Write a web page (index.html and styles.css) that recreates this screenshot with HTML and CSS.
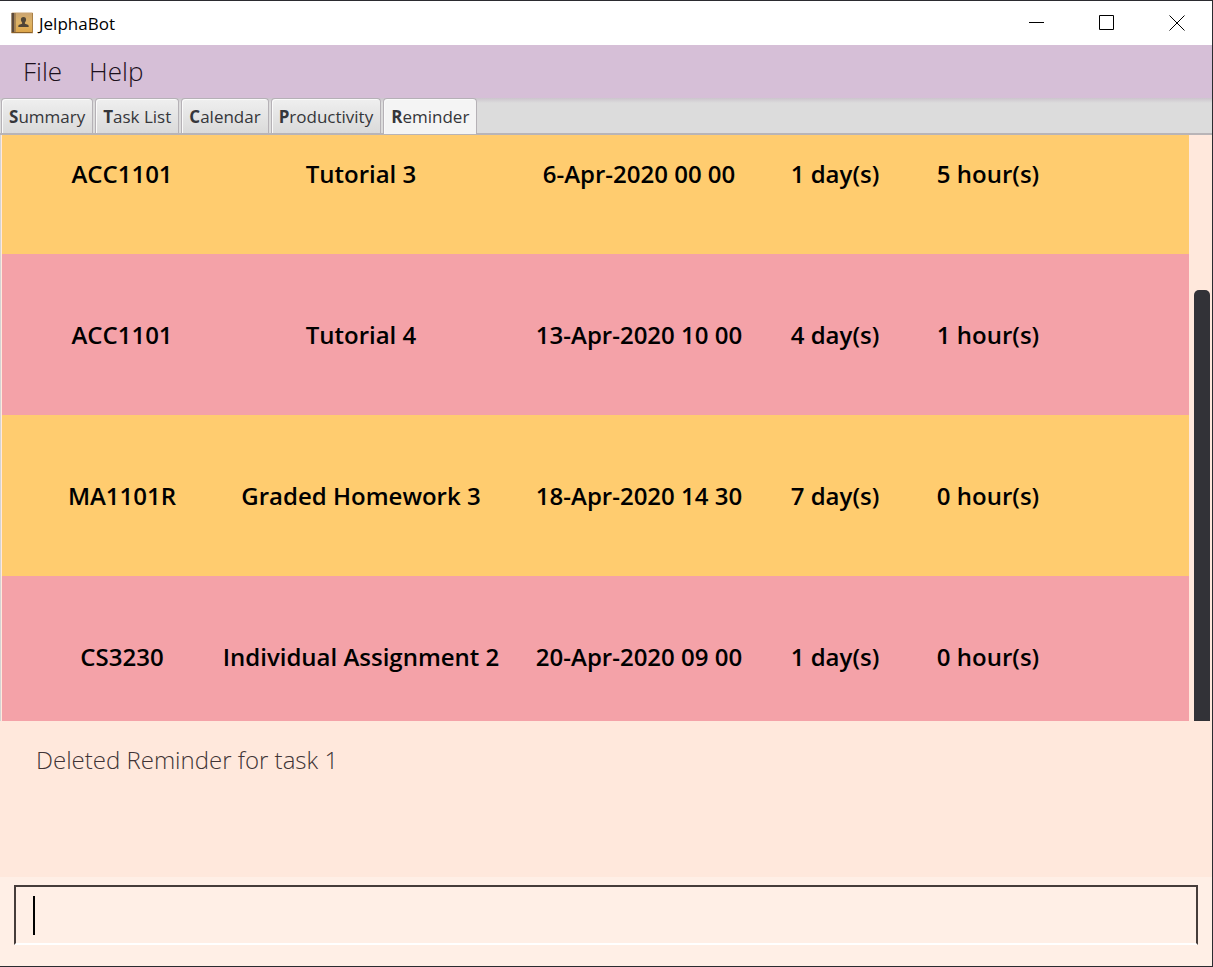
FILE: index.html
```html
<!DOCTYPE html>
<html lang="en">
<head>
<meta charset="utf-8">
<title>JelphaBot</title>
<link rel="stylesheet" href="styles.css">
</head>
<body>
<div class="window">
  <header class="titlebar">
    <svg class="app-icon" width="22" height="22" viewBox="0 0 22 22" aria-hidden="true">
      <defs>
        <linearGradient id="cover" x1="0" y1="0" x2="0" y2="1">
          <stop offset="0" stop-color="#c9a372"/>
          <stop offset=".5" stop-color="#dfb465"/>
          <stop offset="1" stop-color="#dda447"/>
        </linearGradient>
      </defs>
      <rect x="0.500" y="0.500" width="21.500" height="20.500" rx="1" fill="url(#cover)"/>
      <path d="M.5 1h3v19.500h-3z" fill="#5c4a3c"/>
      <path d="M3.500 1h1.500v19.500H3.500z" fill="#a98656"/>
      <path d="M.5 20h21.500v1.200H.5z" fill="#8a6028"/>
      <path d="M21 1h1v20h-1z" fill="#a98046"/>
      <path d="M12.500 5c1.800 0 2.700 1.200 2.600 2.800-.1 1.200-.6 2.200-1.200 2.700v1.300l3 1c.6.300.8 1 .8 2.200H7.300c0-1.200.2-1.900.8-2.200l3-1v-1.300c-.6-.5-1.100-1.500-1.200-2.700C9.800 6.200 10.700 5 12.500 5z" fill="#4f4537"/>
    </svg>
    <h1 class="app-title">JelphaBot</h1>
    <div class="window-controls">
      <button class="window-button" type="button" aria-label="Minimize"><svg width="16" height="16" viewBox="0 0 16 16"><path d="M0 7.500h15"/></svg></button>
      <button class="window-button" type="button" aria-label="Maximize"><svg width="16" height="16" viewBox="0 0 16 16"><path d="M.5.5h14v14H.5z"/></svg></button>
      <button class="window-button" type="button" aria-label="Close"><svg width="16" height="16" viewBox="0 0 16 16"><path d="M.5.5l15 15M15.500.5l-15 15"/></svg></button>
    </div>
  </header>
  <nav class="menubar">
    <button class="menu" type="button">File</button>
    <button class="menu" type="button">Help</button>
  </nav>
  <div class="tabs" role="tablist">
    <button class="tab" type="button" role="tab"><b>S</b>ummary</button>
    <button class="tab" type="button" role="tab"><b>T</b>ask List</button>
    <button class="tab" type="button" role="tab"><b>C</b>alendar</button>
    <button class="tab" type="button" role="tab"><b>P</b>roductivity</button>
    <button class="tab tab-selected" type="button" role="tab" aria-selected="true"><b>R</b>eminder</button>
  </div>
  <main class="panel">
    <div class="viewport">
      <table class="reminders">
        <colgroup><col class="col-module"><col class="col-task"><col class="col-due"><col class="col-days"><col class="col-hours"><col></colgroup>
        <tbody>
          <tr><td class="first">ACC1101</td><td>Tutorial 3</td><td>6-Apr-2020 00 00</td><td>1 day(s)</td><td>5 hour(s)</td><td></td></tr>
          <tr><td class="first">ACC1101</td><td>Tutorial 4</td><td>13-Apr-2020 10 00</td><td>4 day(s)</td><td>1 hour(s)</td><td></td></tr>
          <tr><td class="first">MA1101R</td><td>Graded Homework 3</td><td>18-Apr-2020 14 30</td><td>7 day(s)</td><td>0 hour(s)</td><td></td></tr>
          <tr><td class="first">CS3230</td><td>Individual Assignment 2</td><td>20-Apr-2020 09 00</td><td>1 day(s)</td><td>0 hour(s)</td><td></td></tr>
        </tbody>
      </table>
    </div>
    <div class="scrollbar"><div class="thumb"></div></div>
  </main>
  <section class="result">Deleted Reminder for task 1</section>
  <form class="command">
    <label class="command-box">
      <span class="caret"></span>
      <input class="command-input" type="text" aria-label="Command">
    </label>
  </form>
</div>
</body>
</html>
```

FILE: styles.css
```css
* { box-sizing: border-box; }

body {
  margin: 0;
  font-family: "Open Sans", "Noto Sans", sans-serif;
}

button {
  border: 0;
  padding: 0;
  background: none;
  font-family: inherit;
}

.window {
  display: flex;
  flex-direction: column;
  height: 100vh;
  border: 1px solid #2b2b30;
  border-left: 0;
  background: #ffe8dc;
  overflow: hidden;
}

.titlebar {
  display: flex;
  align-items: center;
  flex: none;
  height: 44px;
  padding-left: 11px;
  background: #fff;
}

.app-icon { margin-bottom: 1px; }

.app-title {
  margin: 0 0 0 6px;
  font-size: 17px;
  font-weight: 400;
  color: #000;
}

.window-controls {
  display: flex;
  margin-left: auto;
}

.window-button {
  display: grid;
  place-items: center;
  width: 70px;
  height: 44px;
}

.window-button svg {
  fill: none;
  stroke: #000;
  stroke-width: 1;
}

.menubar {
  display: flex;
  flex: none;
  gap: 27px;
  height: 53px;
  padding: 0 23px 2px;
  background: #d6bfd7;
}

.menu {
  font-size: 26px;
  font-weight: 300;
  color: #1c101c;
}

.tabs {
  display: flex;
  align-items: flex-end;
  flex: none;
  gap: 2px;
  height: 37px;
  padding-left: 1px;
  border-bottom: 2px solid #b8b4b7;
  background: linear-gradient(#ccc5cd, #dcdcdc 5px);
}

.tab {
  height: 35px;
  padding: 0 7px;
  border: 1px solid #b5b1b6;
  border-bottom: 0;
  border-radius: 4px 4px 0 0;
  background: linear-gradient(#efefef, #dadada);
  box-shadow: inset 1px 1px 0 #fafafa;
  font-size: 17px;
  color: #35363a;
}

.tab-selected {
  height: 36px;
  margin-bottom: -1px;
  background: #f4f4f4;
}

.panel {
  display: flex;
  flex: 1;
  min-height: 0;
  padding-left: 1px;
  border-left: 1px solid #d3d3d3;
}

.viewport {
  flex: 1;
  overflow: hidden;
}

.reminders {
  width: 100%;
  margin-top: -42px;
  border-collapse: collapse;
  table-layout: fixed;
  font-size: 24px;
  font-weight: 600;
  color: #000;
}

.reminders tr { height: 161px; background: #f4a2a8; }
.reminders tr:nth-child(odd) { background: #ffcc6f; }
.reminders td { padding: 0; text-align: center; white-space: nowrap; }
.reminders .first { padding-left: 36px; }

.col-module { width: 204px; }
.col-task { width: 310px; }
.col-due { width: 246px; }
.col-days { width: 146px; }
.col-hours { width: 160px; }

.scrollbar {
  width: 23px;
  padding: 155px 2px 0 5px;
}

.thumb {
  height: 100%;
  border-radius: 5px 5px 0 0;
  background: #323237;
}

.result {
  flex: none;
  height: 156px;
  padding: 21px 36px;
  font-size: 24px;
  font-weight: 300;
  line-height: 36px;
  color: #403436;
}

.command {
  flex: none;
  padding: 8px 14px 21px;
  background: #ffefe6;
}

.command-box {
  display: flex;
  align-items: center;
  height: 60px;
  padding: 0 17px;
  border: 2px solid #463c3a;
  border-bottom-color: #fff;
}

.caret {
  width: 2px;
  height: 39px;
  background: #000;
}

.command-input {
  flex: 1;
  min-width: 0;
  height: 100%;
  border: 0;
  outline: 0;
  background: transparent;
  font: 300 24px "Open Sans", sans-serif;
}
```
